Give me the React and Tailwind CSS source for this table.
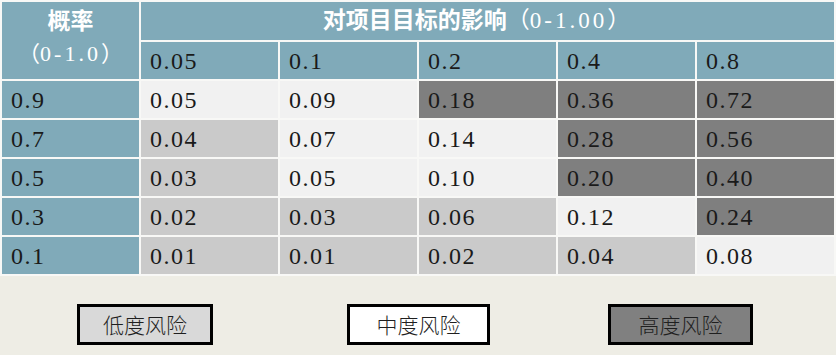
const IMPACTS = ['0.05', '0.1', '0.2', '0.4', '0.8']

// level: 'l' light, 'm' medium, 'h' high
const ROWS = [
  { p: '0.9', cells: [['0.05', 'l'], ['0.09', 'l'], ['0.18', 'h'], ['0.36', 'h'], ['0.72', 'h']] },
  { p: '0.7', cells: [['0.04', 'm'], ['0.07', 'l'], ['0.14', 'l'], ['0.28', 'h'], ['0.56', 'h']] },
  { p: '0.5', cells: [['0.03', 'm'], ['0.05', 'l'], ['0.10', 'l'], ['0.20', 'h'], ['0.40', 'h']] },
  { p: '0.3', cells: [['0.02', 'm'], ['0.03', 'm'], ['0.06', 'm'], ['0.12', 'l'], ['0.24', 'h']] },
  { p: '0.1', cells: [['0.01', 'm'], ['0.01', 'm'], ['0.02', 'm'], ['0.04', 'm'], ['0.08', 'l']] },
]

const LEVEL_BG = {
  l: 'bg-[#f1f1f1]',
  m: 'bg-[#cacaca]',
  h: 'bg-[#7f7f7f]',
}

const FONT = { fontFamily: '"Liberation Serif", "Noto Sans CJK SC", serif' }

function NumCell({ children, className = '' }) {
  return (
    <div className={`flex items-center pl-[9px] pt-[1px] text-[24px] tracking-[1.5px] text-[#1a1a1a] ${className}`}>
      {children}
    </div>
  )
}

export default function App() {
  return (
    <div className="w-[836px] h-[355px] bg-[#eeede5] overflow-hidden" style={FONT}>
      {/* Matrix */}
      <div className="grid grid-cols-[repeat(6,137px)] grid-rows-[38px_repeat(6,37px)] gap-[2px] p-[2px] bg-[#f8f8f6]">
        <div className="row-span-2 bg-[#80aab9] flex flex-col items-center justify-start pt-[5px] text-white">
          <span className="text-[23px] font-bold leading-[30px]">概率</span>
          <span className="text-[22px] leading-[30px] mt-[2px]">
            （<span className="tracking-[3px]">0-1.0</span>）
          </span>
        </div>
        <div className="col-span-5 bg-[#80aab9] flex items-center justify-center pr-[22px] text-white text-[23px] font-bold">
          对项目目标的影响<span className="font-normal">（<span className="tracking-[3px]">0-1.00</span>）</span>
        </div>
        {IMPACTS.map((v, i) => (
          <NumCell key={i} className="bg-[#80aab9]">{v}</NumCell>
        ))}
        {ROWS.map((r) => (
          <>
            <NumCell key={r.p} className="bg-[#80aab9]">{r.p}</NumCell>
            {r.cells.map(([v, lvl], j) => (
              <NumCell key={r.p + j} className={LEVEL_BG[lvl]}>{v}</NumCell>
            ))}
          </>
        ))}
      </div>

      {/* Legend */}
      <div className="flex mt-[28px]" style={{ fontFamily: '"Noto Sans CJK SC", sans-serif' }}>
        <div className="ml-[77px] w-[136px] h-[41px] border-[3px] border-black bg-[#d9d9d9] flex items-center justify-center text-[21px] font-light text-[#1f1f1f]">
          低度风险
        </div>
        <div className="ml-[134px] w-[143px] h-[41px] border-[3px] border-black bg-white flex items-center justify-center text-[21px] font-light text-[#1f1f1f]">
          中度风险
        </div>
        <div className="ml-[118px] w-[145px] h-[41px] border-[3px] border-black bg-[#808080] flex items-center justify-center text-[21px] font-light text-[#1f1f1f]">
          高度风险
        </div>
      </div>
    </div>
  )
}
